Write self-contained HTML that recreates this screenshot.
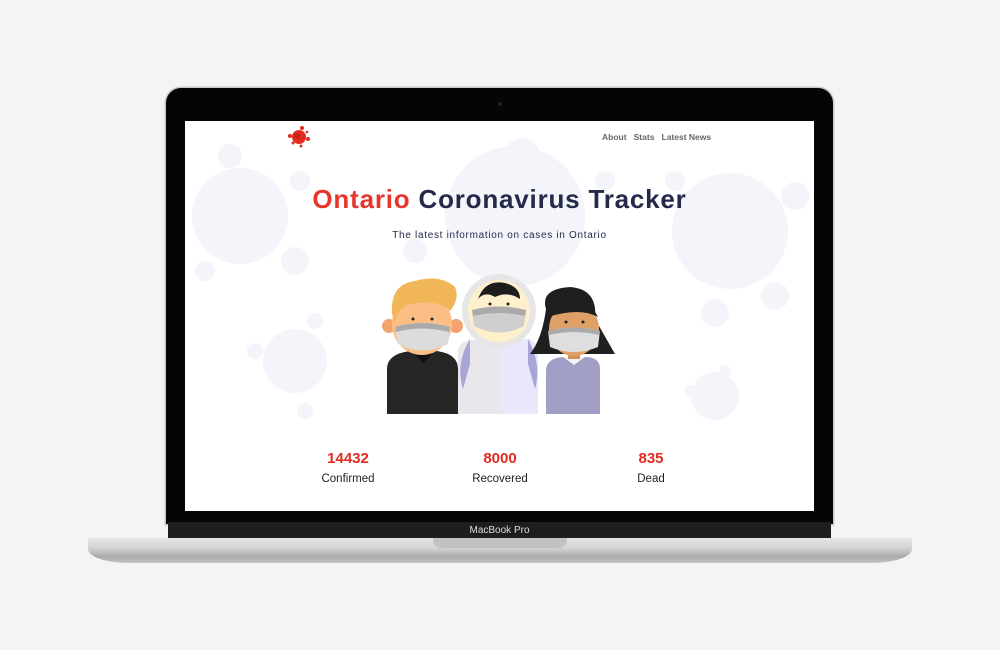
<!DOCTYPE html>
<html><head><meta charset="utf-8"><style>
body{margin:0;width:1000px;height:650px;background:#f4f4f4;position:relative;overflow:hidden;font-family:"Liberation Sans",sans-serif}
.frame{position:absolute;left:166px;top:88px;width:667px;height:436px;background:#050505;border-radius:15px 15px 0 0;box-shadow:0 0 0 1.5px #c8c8c8}
.screen{position:absolute;left:185px;top:121px;width:629px;height:390px;background:#fff;overflow:hidden}
.chin{position:absolute;left:168px;top:522px;width:663px;height:16px;background:#1e1e1e;color:#ddd;font-size:10px;text-align:center;line-height:17px}
.base{position:absolute;left:88px;top:538px;width:824px;height:25px;background:linear-gradient(#e6e6e6,#d4d4d4 40%,#a9a9a9 75%,#c4c4c4);border-radius:2px 2px 40px 40px/2px 2px 14px 14px}
.notch{position:absolute;left:433px;top:538px;width:134px;height:10px;background:#c2c2c2;border-radius:0 0 8px 8px}
.t{position:absolute;width:100%;text-align:center}
</style></head><body>
<div class="frame"></div>
<div style="position:absolute;left:498px;top:102px;width:4px;height:4px;border-radius:50%;background:#222"></div>
<div class="screen">
<svg width="629" height="390" style="position:absolute;left:0;top:0" fill="#f4f5fb">
<g><circle cx="55" cy="95" r="48"/><circle cx="45" cy="35" r="12"/><circle cx="110" cy="140" r="14"/><circle cx="20" cy="150" r="10"/><circle cx="115" cy="60" r="10"/></g>
<g><circle cx="330" cy="95" r="70"/><circle cx="337" cy="35" r="18"/><circle cx="230" cy="130" r="12"/><circle cx="420" cy="60" r="10"/></g>
<g><circle cx="545" cy="110" r="58"/><circle cx="610" cy="75" r="14"/><circle cx="590" cy="175" r="14"/><circle cx="530" cy="192" r="14"/><circle cx="490" cy="60" r="10"/></g>
<g><circle cx="110" cy="240" r="32"/><circle cx="130" cy="200" r="8"/><circle cx="70" cy="230" r="8"/><circle cx="120" cy="290" r="8"/></g>
<g><circle cx="530" cy="275" r="24"/><circle cx="540" cy="250" r="6"/><circle cx="505" cy="270" r="6"/></g>
</svg>
<svg width="24" height="24" style="position:absolute;left:102px;top:4px" fill="#e32b22"><circle cx="12" cy="12" r="7"/><circle cx="10" cy="11" r="3" fill="#c81f18"/><circle cx="15" cy="3" r="2"/><circle cx="3" cy="11" r="2"/><circle cx="21" cy="14" r="2"/><circle cx="14" cy="21" r="1.5"/><circle cx="6" cy="18" r="1.5"/><circle cx="20" cy="7" r="1.3"/></svg>
<div style="position:absolute;left:417px;top:11px;font-size:8.5px;font-weight:bold;color:#666">About&nbsp;&nbsp;&nbsp;Stats&nbsp;&nbsp;&nbsp;Latest News</div>
<div class="t" style="top:63px;font-size:26px;font-weight:bold;color:#232a4a;letter-spacing:0.8px"><span style="color:#e8352b">Ontario</span> Coronavirus Tracker</div>
<div class="t" style="top:109px;font-size:10px;color:#232a4a;letter-spacing:0.7px">The latest information on cases in Ontario</div>
<svg width="260" height="150" viewBox="0 0 260 150" style="position:absolute;left:185px;top:148px">
<path d="M17 145 V100 Q17 85 40 82 H67 Q88 85 88 100 V145Z" fill="#262624"/>
<path d="M43 82 L53 95 L64 82Z" fill="#111"/>
<circle cx="19" cy="57" r="7" fill="#f2a370"/><circle cx="86" cy="57" r="7" fill="#f2a370"/>
<ellipse cx="52" cy="55" rx="30" ry="31" fill="#fbbf85"/>
<path d="M22 45 Q20 15 45 12 Q70 5 85 18 Q90 30 80 42 Q70 30 40 35 Q28 38 25 55Z" fill="#f0b657"/>
<circle cx="43" cy="50" r="1.5" fill="#222"/><circle cx="62" cy="50" r="1.5" fill="#222"/>
<path d="M25 58 Q52 50 80 58 L78 75 Q52 88 28 75Z" fill="#dcdcdc"/><path d="M25 58 Q52 50 80 58 L79 63 Q52 56 26 63Z" fill="#aaa"/>
<path d="M88 145 V80 Q90 70 115 70 H145 Q168 70 168 85 V145Z" fill="#e8e8ec"/>
<path d="M129 70 H160 Q168 75 168 85 V145 H129Z" fill="#e9e8fb"/>
<path d="M100 70 Q85 95 93 120 L100 95Z M158 70 Q172 95 165 120 L158 95Z" fill="#a7a6d6"/>
<circle cx="129" cy="42" r="37" fill="#e6e6e6"/>
<circle cx="129" cy="42" r="31" fill="#fff0cc"/>
<path d="M108 30 Q115 10 135 14 Q150 18 150 30 Q138 22 125 28 Q115 22 108 30Z" fill="#1d1d1d"/>
<circle cx="120" cy="35" r="1.5" fill="#222"/><circle cx="138" cy="35" r="1.5" fill="#222"/>
<path d="M102 41 Q129 34 156 41 L154 57 Q129 70 104 57Z" fill="#cfcfcf"/><path d="M102 41 Q129 34 156 41 L155 47 Q129 41 103 47Z" fill="#aaa"/>
<path d="M176 40 Q170 20 200 18 Q228 20 225 50 L245 85 H160 Q172 70 176 40Z" fill="#1f1f1f"/>
<path d="M176 145 V100 Q178 88 195 88 H215 Q230 88 230 100 V145Z" fill="#a19fc6"/>
<path d="M193 88 L204 96 L215 88 Z" fill="#f4f4f4"/>
<rect x="198" y="74" width="12" height="16" fill="#d0925a"/>
<ellipse cx="204" cy="60" rx="25" ry="27" fill="#dfa065"/>
<path d="M178 48 Q185 28 205 30 Q220 32 228 48 Q210 38 178 48Z" fill="#1f1f1f"/>
<circle cx="196" cy="53" r="1.5" fill="#222"/><circle cx="213" cy="53" r="1.5" fill="#222"/>
<path d="M178 62 Q204 55 230 62 L228 78 Q204 88 180 78Z" fill="#dedede"/><path d="M178 62 Q204 55 230 62 L229 66 Q204 60 179 66Z" fill="#aaa"/>
</svg>
<div style="position:absolute;left:113px;top:329px;width:100px;text-align:center"><div style="color:#e32b22;font-weight:bold;font-size:15px">14432</div><div style="font-size:11.5px;color:#222;margin-top:6px">Confirmed</div></div>
<div style="position:absolute;left:265px;top:329px;width:100px;text-align:center"><div style="color:#e32b22;font-weight:bold;font-size:15px">8000</div><div style="font-size:11.5px;color:#222;margin-top:6px">Recovered</div></div>
<div style="position:absolute;left:416px;top:329px;width:100px;text-align:center"><div style="color:#e32b22;font-weight:bold;font-size:15px">835</div><div style="font-size:11.5px;color:#222;margin-top:6px">Dead</div></div>
</div>
<div class="chin">MacBook Pro</div>
<div class="base"></div>
<div class="notch"></div>
</body></html>
